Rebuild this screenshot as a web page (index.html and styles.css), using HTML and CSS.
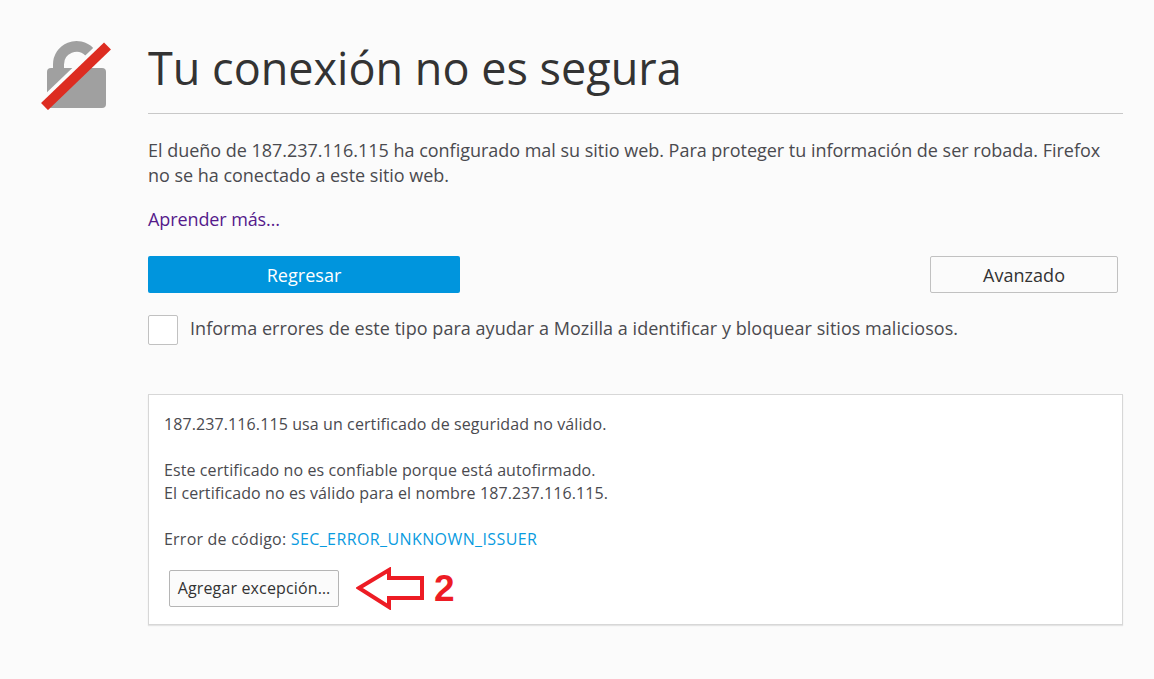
FILE: index.html
```html
<!DOCTYPE html>
<html lang="es">
<head>
<meta charset="utf-8">
<title>Tu conexión no es segura</title>
<link rel="stylesheet" href="styles.css">
</head>
<body>
<div class="page">
  <div class="icon-col">
    <svg class="lock" width="72" height="72" viewBox="0 0 72 72">
      <path d="M18.500 32V26.500a18 18 0 0 1 31-12.500" fill="none" stroke="#a0a0a0" stroke-width="11"/>
      <rect x="7" y="30" width="59" height="40" rx="4" fill="#a0a0a0"/>
      <path d="M65 5.500 2 66" stroke="#fbfbfb" stroke-width="10" fill="none"/>
      <path d="M67.500 8 4.500 68.500" stroke="#dd2c21" stroke-width="10" fill="none"/>
    </svg>
  </div>
  <main class="content">
    <h1 class="title">Tu conexión no es segura</h1>
    <p class="desc">El dueño de 187.237.116.115 ha configurado mal su sitio web. Para proteger tu información de ser robada. Firefox no se ha conectado a este sitio web.</p>
    <a class="learn" href="#">Aprender más…</a>
    <div class="actions">
      <button class="btn primary">Regresar</button>
      <button class="btn secondary">Avanzado</button>
    </div>
    <label class="report">
      <span class="check"></span>
      <span class="report-text">Informa errores de este tipo para ayudar a Mozilla a identificar y bloquear sitios maliciosos.</span>
    </label>
    <section class="panel">
      <p class="line first">187.237.116.115 usa un certificado de seguridad no válido.</p>
      <p class="line gap">Este certificado no es confiable porque está autofirmado.</p>
      <p class="line">El certificado no es válido para el nombre 187.237.116.115.</p>
      <p class="line gap error-line">Error de código: <a class="code" href="#">SEC_ERROR_UNKNOWN_ISSUER</a></p>
      <div class="exception">
        <button class="btn-small">Agregar excepción…</button>
        <svg class="arrow" width="68" height="43" viewBox="0 0 68 43">
          <path d="M3 21 33 3V11H66V31H33V40Z" fill="none" stroke="#ed1c24" stroke-width="4"/>
        </svg>
        <span class="num">2</span>
      </div>
    </section>
  </main>
</div>
</body>
</html>
```
FILE: styles.css
```css
* { box-sizing: border-box; }
html, body { margin: 0; padding: 0; }
body {
  background: #fbfbfb;
  color: #4a4a4f;
  font-family: "Open Sans", "Noto Sans", sans-serif;
  height: 679px;
  overflow: hidden;
}
.page { display: flex; }
.icon-col { width: 148px; flex: none; padding: 38px 0 0 40px; }
.lock { display: block; }
.content { width: 975px; padding-top: 36px; }
.title {
  margin: 0;
  height: 78px;
  font-size: 45px;
  line-height: 64px;
  font-weight: 400;
  color: #333;
  border-bottom: 1px solid #c8c8c8;
}
.desc {
  margin: 24px 0 0;
  font-size: 18px;
  line-height: 25px;
  letter-spacing: -0.02px;
  width: 960px;
}
.learn {
  display: block;
  margin-top: 19px;
  font-size: 18px;
  line-height: 25px;
  letter-spacing: -0.1px;
  color: #551a8b;
  text-decoration: none;
}
.actions {
  display: flex;
  justify-content: space-between;
  margin-top: 24px;
  width: 970px;
}
.btn {
  height: 37px;
  border-radius: 2px;
  font: inherit;
  font-size: 18px;
  letter-spacing: 0.04px;
  padding: 0;
}
.primary { width: 312px; background: #0095dd; border: 0; color: #fff; }
.secondary { width: 188px; background: #fbfbfb; border: 1px solid #c1c1c1; color: #333; }
.report {
  display: flex;
  align-items: center;
  gap: 12px;
  margin-top: 22px;
  height: 30px;
  font-size: 18px;
  letter-spacing: 0.04px;
}
.report-text { margin-bottom: 5px; }
.check {
  width: 30px;
  height: 30px;
  flex: none;
  background: #fff;
  border: 1px solid #c1c1c1;
  border-radius: 2px;
}
.panel {
  margin-top: 49px;
  height: 231px;
  background: #fff;
  border: 1px solid #d7d7d7;
  box-shadow: 0 1px 1px #e4e4e4;
  padding: 18px 15px 0;
  font-size: 16px;
  letter-spacing: 0.1px;
}
.line { margin: 0; line-height: 23px; height: 23px; }
.gap { margin-top: 23px; }
.error-line { letter-spacing: 0.22px; }
.code { color: #0a9be0; text-decoration: none; letter-spacing: 0.4px; }
.exception { display: flex; align-items: center; margin: 15px 0 0 5px; }
.btn-small {
  width: 170px;
  height: 37px;
  padding: 0;
  background: #fbfbfb;
  border: 1px solid #b5b5b5;
  border-radius: 2px;
  font: inherit;
  font-size: 16px;
  letter-spacing: 0.15px;
  color: #333;
}
.arrow { margin: 1px 0 0 17px; flex: none; }
.num {
  margin-left: 10px;
  font-family: "Liberation Sans", sans-serif;
  font-weight: 700;
  font-size: 37px;
  line-height: 37px;
  letter-spacing: 0;
  color: #ed1c24;
}
```
